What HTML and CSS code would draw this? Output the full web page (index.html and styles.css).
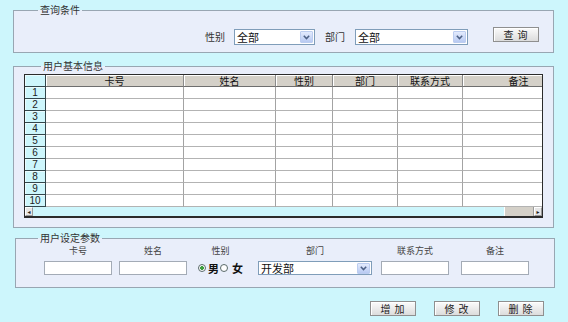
FILE: index.html
```html
<!DOCTYPE html>
<html lang="zh-CN">
<head>
    <meta charset="UTF-8">
    <title>用户管理</title>
    <link rel="stylesheet" href="styles.css">
</head>
<body>
    <div class="page">
        <!-- 查询条件 -->
        <fieldset class="group group-query">
            <legend>查询条件</legend>
            <div class="query-row">
                <span class="lbl">性别</span>
                <div class="combo combo-sex">
                    <span class="combo-text">全部</span>
                    <span class="combo-btn"><svg width="7" height="5" viewBox="0 0 7 5"><polyline points="0.8,0.8 3.5,3.6 6.2,0.8" fill="none" stroke="#4d6185" stroke-width="1.5"/></svg></span>
                </div>
                <span class="lbl">部门</span>
                <div class="combo combo-dept">
                    <span class="combo-text">全部</span>
                    <span class="combo-btn"><svg width="7" height="5" viewBox="0 0 7 5"><polyline points="0.8,0.8 3.5,3.6 6.2,0.8" fill="none" stroke="#4d6185" stroke-width="1.5"/></svg></span>
                </div>
                <button class="btn btn-query">查&nbsp;询</button>
            </div>
        </fieldset>

        <!-- 用户基本信息 -->
        <fieldset class="group group-info">
            <legend>用户基本信息</legend>
            <div class="grid">
                <table class="grid-table">
                    <colgroup>
                        <col class="c-head"><col class="c-card"><col class="c-name"><col class="c-sex"><col class="c-dept"><col class="c-tel"><col class="c-note">
                    </colgroup>
                    <thead>
                        <tr><th class="corner"></th><th>卡号</th><th>姓名</th><th>性别</th><th>部门</th><th>联系方式</th><th>备注</th></tr>
                    </thead>
                    <tbody>
                        <tr><th class="rownum">1</th><td></td><td></td><td></td><td></td><td></td><td></td></tr>
                        <tr><th class="rownum">2</th><td></td><td></td><td></td><td></td><td></td><td></td></tr>
                        <tr><th class="rownum">3</th><td></td><td></td><td></td><td></td><td></td><td></td></tr>
                        <tr><th class="rownum">4</th><td></td><td></td><td></td><td></td><td></td><td></td></tr>
                        <tr><th class="rownum">5</th><td></td><td></td><td></td><td></td><td></td><td></td></tr>
                        <tr><th class="rownum">6</th><td></td><td></td><td></td><td></td><td></td><td></td></tr>
                        <tr><th class="rownum">7</th><td></td><td></td><td></td><td></td><td></td><td></td></tr>
                        <tr><th class="rownum">8</th><td></td><td></td><td></td><td></td><td></td><td></td></tr>
                        <tr><th class="rownum">9</th><td></td><td></td><td></td><td></td><td></td><td></td></tr>
                        <tr><th class="rownum">10</th><td></td><td></td><td></td><td></td><td></td><td></td></tr>
                    </tbody>
                </table>
                <div class="hscroll">
                    <span class="sb-btn">&#9666;</span>
                    <span class="sb-track"></span>
                    <span class="sb-thumb"></span>
                    <span class="sb-btn">&#9656;</span>
                </div>
            </div>
        </fieldset>

        <!-- 用户设定参数 -->
        <fieldset class="group group-params">
            <legend>用户设定参数</legend>
            <div class="params-row">
                <div class="field field-card">
                    <span class="field-lbl">卡号</span>
                    <input class="txt" type="text">
                </div>
                <div class="field field-name">
                    <span class="field-lbl">姓名</span>
                    <input class="txt" type="text">
                </div>
                <div class="field field-sex">
                    <span class="field-lbl">性别</span>
                    <div class="radios">
                        <label class="radio"><input type="radio" name="sex" checked><span>男</span></label>
                        <label class="radio"><input type="radio" name="sex"><span>女</span></label>
                    </div>
                </div>
                <div class="field field-dept">
                    <span class="field-lbl">部门</span>
                    <div class="combo combo-param">
                        <span class="combo-text">开发部</span>
                        <span class="combo-btn"><svg width="7" height="5" viewBox="0 0 7 5"><polyline points="0.8,0.8 3.5,3.6 6.2,0.8" fill="none" stroke="#4d6185" stroke-width="1.5"/></svg></span>
                    </div>
                </div>
                <div class="field field-tel">
                    <span class="field-lbl">联系方式</span>
                    <input class="txt" type="text">
                </div>
                <div class="field field-note">
                    <span class="field-lbl">备注</span>
                    <input class="txt" type="text">
                </div>
            </div>
        </fieldset>

        <div class="actions">
            <button class="btn">增&nbsp;加</button>
            <button class="btn">修&nbsp;改</button>
            <button class="btn">删&nbsp;除</button>
        </div>
    </div>
</body>
</html>
```

FILE: styles.css
```css
body {
    margin: 0;
    background: #cdf6fc;
    font-family: "Noto Sans CJK SC", "DejaVu Sans", sans-serif;
    color: #222;
}

.page {
    padding: 4px 0 0 13px;
}

/* Group boxes */
.group {
    box-sizing: border-box;
    width: 541px;
    margin: 0;
    padding: 0;
    border: 1px solid #98a6b2;
    background: #e9eefa;
    min-inline-size: 0;
}

.group legend {
    padding: 0 2px;
    font-size: 10px;
    line-height: 12px;
    color: #333;
}

.group-query legend { margin-left: 24px; }
.group-info legend { margin-left: 17px; }
.group-params legend { margin-left: 22px; }

.group-info {
    margin-top: 7px;
    padding: 2px 10px 9px 10px;
}

.group-params {
    width: 540px;
    margin: 4px 0 0 2px;
    padding: 1px 0 12px 0;
}

/* Query row */
.query-row {
    display: flex;
    align-items: flex-start;
    padding: 13px 0 7px 0;
    margin-left: 191px;
}

.lbl {
    font-size: 10px;
    line-height: 16px;
    color: #333;
}

.combo-sex { width: 81px; margin: 0 10px 0 9px; }
.combo-dept { width: 113px; margin: 0 25px 0 10px; }
.btn-query { margin-top: -2px; }

/* Combo box */
.combo {
    box-sizing: border-box;
    height: 16px;
    display: flex;
    align-items: center;
    background: #fff;
    border: 1px solid #7f9db9;
}

.combo-text {
    flex: 1;
    padding-left: 2px;
    font-size: 11px;
    line-height: 14px;
    color: #111;
}

.combo-btn {
    box-sizing: border-box;
    width: 13px;
    height: 12px;
    margin-right: 1px;
    display: flex;
    align-items: center;
    justify-content: center;
    background: linear-gradient(#e3ebfd, #b8caf2);
    border: 1px solid #bccdf0;
    border-radius: 1px;
}

/* Buttons */
.btn {
    box-sizing: border-box;
    width: 46px;
    height: 15px;
    padding: 0;
    font-family: inherit;
    font-size: 10px;
    line-height: 13px;
    letter-spacing: 1px;
    color: #222;
    background: linear-gradient(#fbfbfb, #dcdcdc);
    border: 1px solid #8f8f8f;
    box-shadow: inset 1px 1px #fff;
}

/* Data grid */
.grid {
    box-sizing: border-box;
    width: 519px;
    border: 1px solid #2b2b2b;
    border-bottom-width: 2px;
    overflow: hidden;
    background: #fff;
}

.grid-table {
    width: 550px;
    table-layout: fixed;
    border-collapse: separate;
    border-spacing: 0;
}

.c-head { width: 21px; }
.c-card { width: 138px; }
.c-name { width: 92px; }
.c-sex { width: 57px; }
.c-dept { width: 65px; }
.c-tel { width: 65px; }
.c-note { width: 112px; }

.grid-table th,
.grid-table td {
    box-sizing: border-box;
    height: 12px;
    padding: 0;
    font-size: 10px;
    line-height: 11px;
    font-weight: normal;
    white-space: nowrap;
}

.grid-table thead th {
    background: #d4d0c8;
    border-right: 1px solid #8a8a8a;
    border-bottom: 1px solid #6e6e6e;
    box-shadow: inset 1px 1px #fff;
    text-align: center;
    color: #111;
}

.grid-table thead th.corner,
.grid-table .rownum {
    background: #cdf6fc;
    border-right: 1px solid #33464c;
    border-bottom: 1px solid #33464c;
    box-shadow: inset 1px 1px #eafcff;
}

.grid-table .rownum {
    font-family: "Liberation Sans", sans-serif;
    text-align: center;
    color: #222;
}

.grid-table td {
    border-right: 1px solid #a3a3a3;
    border-bottom: 1px solid #b3b3b3;
}

/* Horizontal scrollbar */
.hscroll {
    display: flex;
    height: 9px;
    background: #cdf6fc;
}

.sb-btn {
    box-sizing: border-box;
    width: 8px;
    font-size: 6px;
    line-height: 8px;
    text-align: center;
    color: #222;
    background: #e6e6e6;
    border: 1px solid #9a9a9a;
    border-top-color: #fff;
    border-left-color: #fff;
}

.sb-track { flex: 1; }

.sb-thumb {
    box-sizing: border-box;
    width: 30px;
    background: #d4d0c8;
    border-left: 1px solid #fff;
    border-right: 1px solid #9a9a9a;
}

/* Parameter fields */
.params-row {
    display: flex;
    align-items: flex-start;
    padding-left: 28px;
}

.field {
    display: flex;
    flex-direction: column;
    align-items: center;
}

.field-lbl {
    font-size: 9px;
    line-height: 12px;
    margin-bottom: 4px;
    color: #444;
}

.txt {
    box-sizing: border-box;
    width: 68px;
    height: 14px;
    margin: 0;
    padding: 0;
    background: #fff;
    border: 1px solid #a3abb6;
}

.field-name { margin-left: 7px; }
.field-sex { margin-left: 11px; }
.field-dept { margin-left: 15px; }
.field-tel { margin-left: 9px; }
.field-note { margin-left: 12px; }

.combo-param {
    width: 114px;
    height: 14px;
}

.combo-param .combo-btn {
    height: 11px;
}

.radios {
    display: flex;
    align-items: center;
    height: 14px;
}

.radio {
    display: flex;
    align-items: center;
    font-size: 11px;
    font-weight: bold;
    color: #111;
}

.radio + .radio { margin-left: 1px; }

.radio input {
    appearance: none;
    box-sizing: border-box;
    width: 8px;
    height: 8px;
    margin: 0 2px 0 0;
    border: 1px solid #5a6a6a;
    border-radius: 50%;
    background: #fff;
}

.radio input:checked {
    background: radial-gradient(circle, #3f9e3f 0 1.6px, #fff 2.2px);
}

.radio + .radio input { margin-right: 4px; }

/* Bottom buttons */
.actions {
    display: flex;
    gap: 18px;
    margin: 13px 0 0 357px;
}
```
